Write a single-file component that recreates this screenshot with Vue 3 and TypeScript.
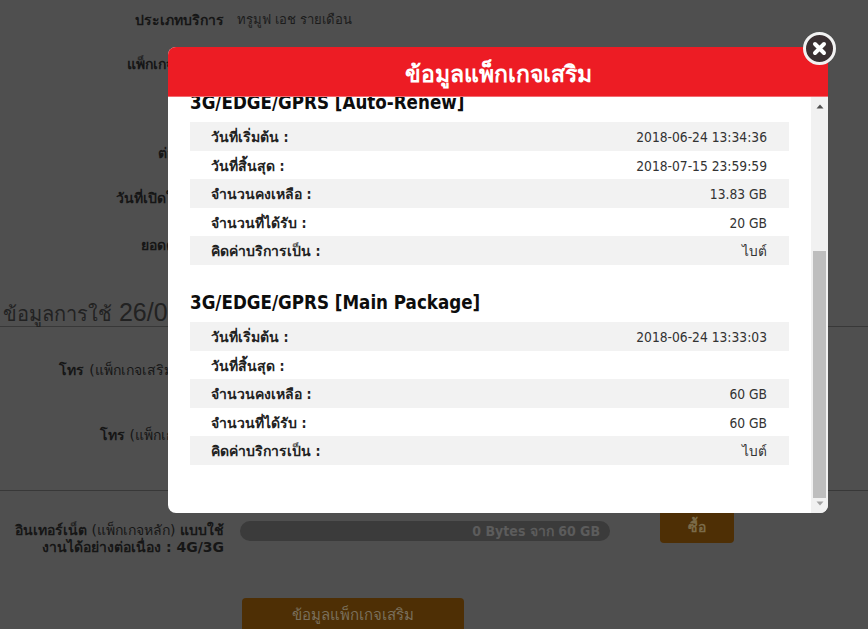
<script setup lang="ts">
interface Row { label: string; value: string }
interface Section { title: string; rows: Row[] }

const sections: Section[] = [
  {
    title: '3G/EDGE/GPRS [Auto-Renew]',
    rows: [
      { label: 'วันที่เริ่มต้น :', value: '2018-06-24 13:34:36' },
      { label: 'วันที่สิ้นสุด :', value: '2018-07-15 23:59:59' },
      { label: 'จำนวนคงเหลือ :', value: '13.83 GB' },
      { label: 'จำนวนที่ได้รับ :', value: '20 GB' },
      { label: 'คิดค่าบริการเป็น :', value: 'ไบต์' },
    ],
  },
  {
    title: '3G/EDGE/GPRS [Main Package]',
    rows: [
      { label: 'วันที่เริ่มต้น :', value: '2018-06-24 13:33:03' },
      { label: 'วันที่สิ้นสุด :', value: '' },
      { label: 'จำนวนคงเหลือ :', value: '60 GB' },
      { label: 'จำนวนที่ได้รับ :', value: '60 GB' },
      { label: 'คิดค่าบริการเป็น :', value: 'ไบต์' },
    ],
  },
]
</script>

<template>
  <div class="page">
    <div class="info-row first"><span class="lab">ประเภทบริการ</span><span class="val">ทรูมูฟ เอช รายเดือน</span></div>
    <div class="info-row r2"><span class="lab">แพ็กเกจปัจจุบัน:</span></div>
    <div class="info-row r3"><span class="lab">ต่ออายุถึง :</span></div>
    <div class="info-row r4"><span class="lab">วันที่เปิดใช้บริการ</span></div>
    <div class="info-row r5"><span class="lab">ยอดค้างชำระ</span></div>
    <h2 class="usage-title"><span class="th">ข้อมูลการใช้</span> 26/06/2018</h2>
    <div class="info-row r6"><span class="lab"><b>โทร</b> <i>(แพ็กเกจเสริม)</i> <b>ทั่วไทย</b></span></div>
    <div class="info-row r7"><span class="lab"><b>โทร</b> <i>(แพ็กเกจหลัก)</i> <b>:</b></span></div>
    <hr class="divider" />
    <div class="net-row">
      <span class="lab net-lab"><b>อินเทอร์เน็ต</b> <i>(แพ็กเกจหลัก)</i> <b>แบบใช้งานได้อย่างต่อเนื่อง : 4G/3G</b></span>
      <div class="bar">0 Bytes จาก 60 GB</div>
      <div class="buy">ซื้อ</div>
    </div>
    <div class="more">ข้อมูลแพ็กเกจเสริม</div>
  </div>

  <div class="modal">
    <header class="modal-head">ข้อมูลแพ็กเกจเสริม</header>
    <div class="modal-main">
      <div class="content">
        <section v-for="s in sections" :key="s.title" class="sec">
          <h3>{{ s.title }}</h3>
          <div v-for="r in s.rows" :key="r.label" class="row">
            <span class="k">{{ r.label }}</span>
            <span class="v">{{ r.value }}</span>
          </div>
        </section>
      </div>
      <div class="scroll">
        <svg width="8" height="5" viewBox="0 0 8 5"><path d="M4 0.5 7.5 4.5H0.5Z" fill="#505050" /></svg>
        <div class="track"><div class="thumb"></div></div>
        <svg width="8" height="5" viewBox="0 0 8 5"><path d="M4 4.5 0.5 0.5H7.5Z" fill="#a3a3a3" /></svg>
      </div>
    </div>
    <button class="close" type="button" aria-label="close">
      <svg width="15" height="15" viewBox="0 0 15 15"><path d="M3 3 12 12M12 3 3 12" stroke="#fff" stroke-width="4" stroke-linecap="round" /></svg>
    </button>
  </div>
</template>

<style>
html, body { margin: 0; height: 100%; overflow: hidden; background: #4f4f4f; }
</style>

<style scoped>
.page {
  height: 629px;
  overflow: hidden;
  box-sizing: border-box;
  background: #4f4f4f;
  color: #161616;
  font: 14px "DejaVu Sans", Tahoma, sans-serif;
  padding-top: 10px;
}
.info-row { display: grid; grid-template-columns: 224px auto; column-gap: 13px; line-height: 20px; }
.lab { text-align: right; font-weight: 600; white-space: nowrap; }
.lab i { font-style: normal; font-weight: 400; }
.val { color: #1c1c1c; font-size: 13.1px; }
.r2 { margin-top: 24px; }
.r3 { margin-top: 69px; }
.r4 { margin-top: 25px; }
.r5 { margin-top: 27px; }
.usage-title {
  margin: 42px 0 0;
  padding: 0 0 0 3px;
  height: 29px;
  font: 400 25px/30px "Liberation Sans", sans-serif;
  color: #222;
  border-bottom: 1px solid #383838;
  white-space: nowrap;
}
.th { font-size: 20px; font-weight: 400; }
.r6 { margin-top: 33px; }
.r7 { margin-top: 45px; }
.divider { border: 0; border-top: 1px solid #383838; margin: 45px 0 0; }
.net-row { display: flex; align-items: flex-start; margin-top: 22px; }
.net-lab { width: 224px; flex: none; white-space: normal; line-height: 17px; font-weight: 400; margin-top: 9px; }
.bar {
  margin: 8px 0 0 16px;
  width: 370px;
  height: 20px;
  border-radius: 10px;
  background: #3b3b3b;
  color: #5c5c5c;
  font-family: "DejaVu Sans Condensed", "DejaVu Sans", sans-serif;
  font-weight: 700;
  line-height: 20px;
  text-align: right;
  padding-right: 10px;
  box-sizing: border-box;
}
.buy {
  margin: 0 0 0 50px;
  width: 74px;
  height: 30px;
  border-radius: 0 0 4px 4px;
  background: #4e2f05;
  color: #7a6a48;
  text-align: center;
  line-height: 28px;
  font-weight: 700;
}
.more {
  margin: 42px 0 0 242px;
  width: 222px;
  height: 40px;
  border-radius: 4px;
  background: #4e2f05;
  color: #7a6f5c;
  text-align: center;
  line-height: 34px;
  font-weight: 400;
  font-family: "Liberation Sans", sans-serif;
  font-size: 15px;
}

.modal {
  position: fixed;
  left: 168px;
  top: 47px;
  width: 660px;
  height: 466px;
  background: #fff;
  border-radius: 8px;
  display: flex;
  flex-direction: column;
  font: 13.7px "DejaVu Sans Condensed", "DejaVu Sans", Tahoma, sans-serif;
}
.modal-head {
  height: 50px;
  box-sizing: border-box;
  flex: none;
  background: #ed1c24;
  border-bottom: 1px solid #f36b70;
  border-radius: 8px 8px 0 0;
  color: #fff;
  text-align: center;
  font-size: 23px;
  font-weight: 700;
  line-height: 54px;
}
.modal-main { flex: 1; min-height: 0; display: flex; border-radius: 0 0 8px 8px; overflow: hidden; }
.content { flex: 1; min-width: 0; padding: 0 22px; overflow: hidden; }
.sec:first-child { margin-top: -7px; }
.sec h3 {
  margin: 0;
  height: 25px;
  font: 700 18.6px/25px "DejaVu Sans Condensed", "DejaVu Sans", Tahoma, sans-serif;
  color: #0d0d0d;
}
.sec + .sec { margin-top: 25px; }
.row {
  display: flex;
  justify-content: space-between;
  height: 28.6px;
  line-height: 31px;
  padding: 0 22px 0 21px;
}
.sec h3 + .row { margin-top: 7px; }
.row:nth-child(even) { background: #f2f2f2; }
.k { font-weight: 700; color: #222; font-size: 14px; }
.v { color: #333; }
.scroll {
  flex: none;
  width: 17px;
  background: #f1f1f1;
  display: flex;
  flex-direction: column;
  align-items: center;
  padding: 7px 0;
  box-sizing: border-box;
}
.track { flex: 1; width: 100%; padding: 0 2px 3px; box-sizing: border-box; display: flex; flex-direction: column; justify-content: flex-end; }
.thumb { height: 247px; background: #bebebe; }
.close {
  position: absolute;
  right: -8px;
  top: -15px;
  width: 33px;
  height: 33px;
  padding: 0;
  box-sizing: border-box;
  border-radius: 50%;
  border: 3px solid #f2f2f2;
  background: #3a3032;
  display: flex;
  align-items: center;
  justify-content: center;
}
</style>
